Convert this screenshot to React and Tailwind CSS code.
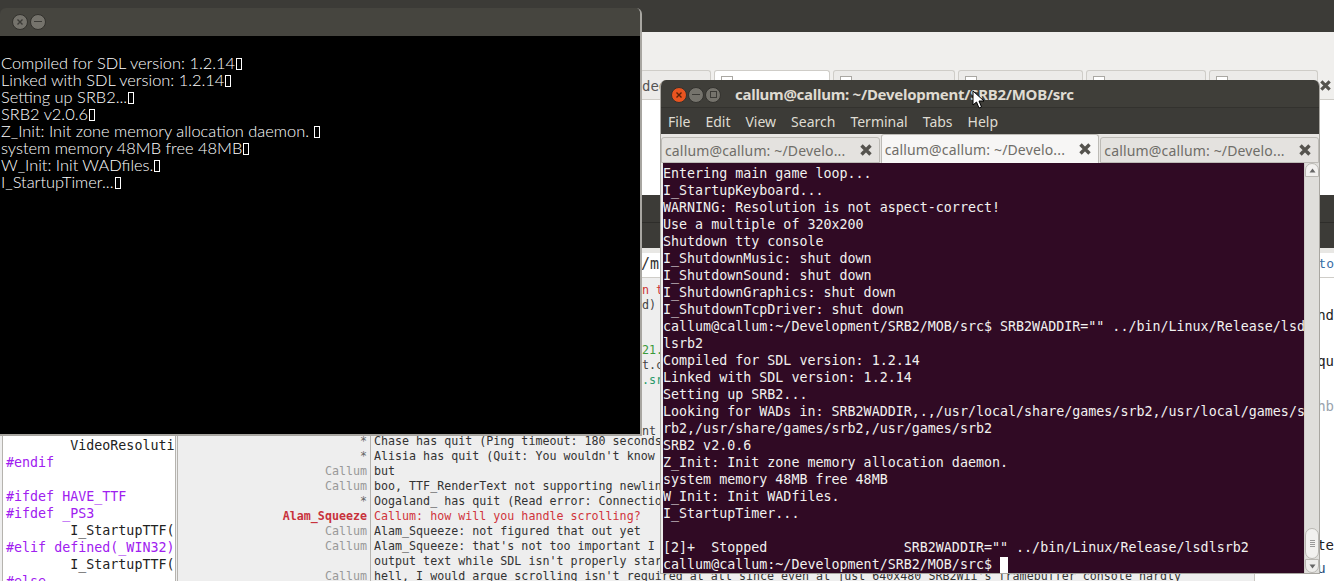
const mono = { fontFamily: '"DejaVu Sans Mono", monospace' };

const sdlLines = [
  "Compiled for SDL version: 1.2.14",
  "Linked with SDL version: 1.2.14",
  "Setting up SRB2...",
  "SRB2 v2.0.6",
  "Z_Init: Init zone memory allocation daemon. ",
  "system memory 48MB free 48MB",
  "W_Init: Init WADfiles.",
  "I_StartupTimer...",
];

const termLines = [
  "Entering main game loop...",
  "I_StartupKeyboard...",
  "WARNING: Resolution is not aspect-correct!",
  "Use a multiple of 320x200",
  "Shutdown tty console",
  "I_ShutdownMusic: shut down",
  "I_ShutdownSound: shut down",
  "I_ShutdownGraphics: shut down",
  "I_ShutdownTcpDriver: shut down",
  'callum@callum:~/Development/SRB2/MOB/src$ SRB2WADDIR="" ../bin/Linux/Release/lsd',
  "lsrb2",
  "Compiled for SDL version: 1.2.14",
  "Linked with SDL version: 1.2.14",
  "Setting up SRB2...",
  "Looking for WADs in: SRB2WADDIR,.,/usr/local/share/games/srb2,/usr/local/games/s",
  "rb2,/usr/share/games/srb2,/usr/games/srb2",
  "SRB2 v2.0.6",
  "Z_Init: Init zone memory allocation daemon.",
  "system memory 48MB free 48MB",
  "W_Init: Init WADfiles.",
  "I_StartupTimer...",
  " ",
  '[2]+  Stopped                 SRB2WADDIR="" ../bin/Linux/Release/lsdlsrb2',
];

const editorLines = [
  ["        VideoResoluti", "text-[#222]"],
  ["#endif", "text-[#a020f0]"],
  [" ", ""],
  ["#ifdef HAVE_TTF", "text-[#a020f0]"],
  ["#ifdef _PS3", "text-[#a020f0]"],
  ["        I_StartupTTF(", "text-[#222]"],
  ["#elif defined(_WIN32)", "text-[#a020f0]"],
  ["        I_StartupTTF(", "text-[#222]"],
  ["#else", "text-[#a020f0]"],
];

const chatRows = [
  ["*", "Chase has quit (Ping timeout: 180 seconds)"],
  ["*", "Alisia has quit (Quit: You wouldn't know it)"],
  ["Callum", "but"],
  ["Callum", "boo, TTF_RenderText not supporting newlines"],
  ["*", "Oogaland_ has quit (Read error: Connection reset)"],
  ["Alam_Squeeze", "Callum: how will you handle scrolling?", true],
  ["Callum", "Alam_Squeeze: not figured that out yet"],
  ["Callum", "Alam_Squeeze: that's not too important I guess"],
  ["", "output text while SDL isn't properly started"],
  ["Callum", "hell, I would argue scrolling isn't required at all since even at just 640x480 SRB2Wii's framebuffer console hardly"],
];

function BgTab({ w, active, children }) {
  return (
    <div
      className={`shrink-0 h-full border border-b-0 border-[#cfcdc8] rounded-t-[3px] overflow-hidden ${w} ${
        active ? "bg-white" : "bg-[#ecebe9] mt-[2px]"
      }`}
    >
      {children}
    </div>
  );
}

function TermTab({ active }) {
  return (
    <div
      className={`flex items-center justify-between flex-1 min-w-0 pl-[3px] pr-[6px] border border-[#bdbbb6] rounded-t-[3px] ${
        active ? "bg-[#f7f6f5] h-[29px] border-b-0" : "bg-[#e4e2df] h-[26px] mt-[3px]"
      }`}
    >
      <span
        className="text-[14px] text-[#6f6d68] whitespace-nowrap overflow-hidden"
        style={{ fontFamily: '"Noto Sans", sans-serif', letterSpacing: "0.15px" }}
      >
        callum@callum: ~/Develo...
      </span>
      <svg width="14" height="14" viewBox="0 0 14 14" className="shrink-0">
        <path d="M2.5 2.5 L11.5 11.5 M11.5 2.5 L2.5 11.5" stroke="#55534e" strokeWidth="3.4" />
      </svg>
    </div>
  );
}

function WinButton({ color, children }) {
  return (
    <div
      className={`w-[16px] h-[16px] rounded-full flex items-center justify-center border border-[#33322e] ${color}`}
    >
      {children}
    </div>
  );
}

function NoGlyph() {
  return (
    <span className="inline-block w-[6px] h-[12px] border border-white ml-[1px] align-[-1px]" />
  );
}

function DocIcon() {
  return <div className="w-[12px] h-[14px] mt-[5px] ml-[6px] bg-white border border-[#aaa8a3]" />;
}

export default function App() {
  return (
    <div className="relative w-[1334px] h-[581px] overflow-hidden bg-white">
      {/* window behind everything */}
      <div className="flex flex-col h-full">
        <div className="h-[32px] bg-[#3c3b37] shrink-0" />
        <div className="h-[38px] bg-[#f0efed] shrink-0" />
        <div
          className="h-[30px] bg-[#f0efed] border-b border-[#cfcdc8] shrink-0 flex items-end pl-[640px] gap-[3px] text-[#555]"
          style={mono}
        >
          <BgTab w="w-[71px]">
            <div className="text-[14px] leading-[30px] pl-[1px] whitespace-pre">ded</div>
          </BgTab>
          <BgTab w="w-[116px]" active>
            <DocIcon />
          </BgTab>
          <BgTab w="w-[122px]">
            <DocIcon />
          </BgTab>
          <BgTab w="w-[125px]">
            <DocIcon />
          </BgTab>
          <BgTab w="w-[120px]">
            <DocIcon />
          </BgTab>
          <BgTab w="w-[109px]">
            <DocIcon />
          </BgTab>
          <svg width="13" height="13" viewBox="0 0 14 14" className="shrink-0 mb-[7px] -ml-[2px]">
            <path d="M2.5 2.5 L11.5 11.5 M11.5 2.5 L2.5 11.5" stroke="#55534e" strokeWidth="3.4" />
          </svg>
        </div>
        <div className="h-[95px] bg-white shrink-0" />
        <div className="h-[28px] bg-[#3c3b37] border-b border-[#2e2d2a] shrink-0" />
        <div className="h-[25px] bg-[#3c3b37] shrink-0" />
        <div className="h-[5px] bg-[#e8e7e4] shrink-0" />
        <div
          className="h-[25px] bg-white border-b border-[#cfcdc8] shrink-0 flex justify-between text-[15px] text-[#333]"
          style={mono}
        >
          <span className="pl-[641px] leading-[22px]">/m</span>
          <span className="text-[#3a6ea5] text-[13px] leading-[22px]">to</span>
        </div>
        <div className="flex flex-1 min-h-0">
          <div className="w-[660px] bg-[#eeeeee] shrink-0" />
          <div
            className="flex-1 flex flex-col items-end text-[14px] text-[#222] leading-[17px] whitespace-pre pt-[29px]"
            style={mono}
          >
            <span className="h-[46px]">nd</span>
            <span className="h-[45px]">qu</span>
            <span className="h-[139px] text-[#9aa4ae]">hb</span>
            <span className="h-[23px]">te</span>
            <span className="text-[#2c4f7c]">u </span>
          </div>
        </div>
      </div>

      {/* fragments of chat visible between windows */}
      <div
        className="absolute left-[642px] top-[283px] w-[18px] h-[153px] overflow-hidden text-[11.7px] whitespace-pre leading-[15px]"
        style={mono}
      >
        <div className="text-[#c33]">n t</div>
        <div className="text-[#444]">d)</div>
        <div className="text-[#444] h-[30px]"> </div>
        <div className="text-[#3a9a3a]">21.</div>
        <div className="text-[#444]">t.c</div>
        <div className="text-[#2a9a6a]">.sr</div>
        <div className="mt-[36px] text-[#444]">nt</div>
      </div>

      {/* editor + chat */}
      <div className="absolute left-0 top-[436px] w-[1255px] h-[145px] flex overflow-hidden bg-[#eeeeee] border-r border-[#c8c6c1]">
        <div
          className="w-[174px] ml-[2px] shrink-0 bg-white border-l border-r border-[#b5b3ae] pl-[3px] pt-[1px] text-[13.33px] leading-[17px] whitespace-pre overflow-hidden"
          style={mono}
        >
          {editorLines.map(([t, c], i) => (
            <div key={i} className={`h-[17px] ${c}`}>
              {t}
            </div>
          ))}
        </div>
        <div
          className="flex-1 min-w-0 ml-[1px] border-l border-[#b5b3ae] text-[11.67px] leading-[15px] whitespace-pre overflow-hidden"
          style={mono}
        >
          {chatRows.map(([nick, msg, hi], i) => (
            <div key={i} className="flex h-[15px] first:mt-[-2px]">
              <span
                className={`w-[193px] shrink-0 text-right pr-[3px] border-r border-[#b5b3ae] ${
                  hi ? "text-[#c8323c] font-bold" : nick === "*" ? "text-[#666]" : "text-[#999]"
                }`}
              >
                {nick}
              </span>
              <span className={`pl-[3px] ${hi ? "text-[#d0343c]" : "text-[#333]"}`}>{msg}</span>
            </div>
          ))}
        </div>
      </div>

      {/* SDL window */}
      <div className="absolute left-0 top-[8px] w-[642px] h-[428px] flex flex-col rounded-t-[6px] overflow-hidden border-r-2 border-b-2 border-[#a8a6a1]">
        <div className="h-[28px] bg-[#46453f] shrink-0 flex items-center gap-[2px] pl-[12px] pb-[1px]">
          <WinButton color="bg-[#75736c]">
            <svg width="8" height="8" viewBox="0 0 8 8">
              <path d="M1.5 1.5 L6.5 6.5 M6.5 1.5 L1.5 6.5" stroke="#3c3b37" strokeWidth="1.4" />
            </svg>
          </WinButton>
          <WinButton color="bg-[#75736c]">
            <div className="w-[8px] h-[1.5px] bg-[#3c3b37]" />
          </WinButton>
        </div>
        <div
          className="flex-1 bg-black pt-[18px] text-[16.4px] leading-[17px] font-light text-white whitespace-pre pl-[1px]"
          style={{ fontFamily: "Lato, sans-serif" }}
        >
          {sdlLines.map((l, i) => (
            <div key={i} className="h-[17px]">
              {l}
              <NoGlyph />
            </div>
          ))}
        </div>
      </div>

      {/* Terminal */}
      <div className="absolute left-[660px] top-[80px] w-[660px] h-[494px] flex flex-col rounded-t-[6px] overflow-hidden border-x border-b border-[#a8a6a1] bg-[#edecea]">
        <div className="h-[28px] bg-[#3f3e39] border-b border-[#33322e] shrink-0 flex items-center pl-[10px] pt-[2px]">
          <div className="flex gap-[1px]">
            <WinButton color="bg-[#e95420]">
              <svg width="8" height="8" viewBox="0 0 8 8">
                <path d="M1.5 1.5 L6.5 6.5 M6.5 1.5 L1.5 6.5" stroke="#5a2208" strokeWidth="1.4" />
              </svg>
            </WinButton>
            <WinButton color="bg-[#75736c]">
              <div className="w-[8px] h-[1.5px] bg-[#3c3b37]" />
            </WinButton>
            <WinButton color="bg-[#75736c]">
              <div className="w-[7px] h-[7px] border border-[#3c3b37]" />
            </WinButton>
          </div>
          <span
            className="ml-[14px] text-[15px] font-bold text-[#dfdbd2] whitespace-nowrap"
            style={{ fontFamily: '"Noto Sans", sans-serif', letterSpacing: "-0.27px" }}
          >
            callum@callum: ~/Development/SRB2/MOB/src
          </span>
        </div>
        <div
          className="h-[26px] bg-[#3c3b37] shrink-0 flex items-center gap-[15px] pl-[7px] text-[14px] text-[#dfdbd2]"
          style={{ fontFamily: '"Noto Sans", sans-serif' }}
        >
          <span>File</span>
          <span>Edit</span>
          <span>View</span>
          <span>Search</span>
          <span>Terminal</span>
          <span>Tabs</span>
          <span>Help</span>
        </div>
        <div className="h-[29px] bg-[#e8e6e3] shrink-0 flex gap-[1px]">
          <TermTab />
          <TermTab active />
          <TermTab />
        </div>
        <div className="flex-1 min-h-0 flex pl-[2px] bg-[#edecea]">
          <div
            className="flex-1 min-w-0 bg-[#300a24] text-[#f2f1f0] text-[13.33px] leading-[17px] whitespace-pre overflow-hidden pt-[2px]"
            style={mono}
          >
            {termLines.map((l, i) => (
              <div key={i} className="h-[17px]">
                {l}
              </div>
            ))}
            <div className="h-[17px] flex items-center">
              <span>callum@callum:~/Development/SRB2/MOB/src$ </span>
              <span className="inline-block w-[8px] h-[16px] bg-white" />
            </div>
          </div>
          <div className="w-[15px] shrink-0 bg-[#dfdedb] flex flex-col items-stretch border-l border-[#d0cec9]">
            <div className="h-[14px] bg-[#f2f1ef] border border-[#b9b7b2] rounded-t-[7px] flex items-center justify-center">
              <svg width="7" height="5" viewBox="0 0 7 5">
                <path d="M3.5 0.5 L6.5 4.5 L0.5 4.5 Z" fill="#666" />
              </svg>
            </div>
            <div className="flex-1" />
            <div className="h-[31px] bg-[#f2f1ef] border border-[#b9b7b2] rounded-[7px] flex flex-col items-center justify-center gap-[1px]">
              <div className="w-[5px] h-px bg-[#999]" />
              <div className="w-[5px] h-px bg-[#999]" />
              <div className="w-[5px] h-px bg-[#999]" />
              <div className="w-[5px] h-px bg-[#999]" />
            </div>
            <div className="h-[14px] bg-[#efeeec] border border-[#b9b7b2] rounded-b-[7px] flex items-center justify-center">
              <svg width="7" height="5" viewBox="0 0 7 5">
                <path d="M3.5 4.5 L6.5 0.5 L0.5 0.5 Z" fill="#666" />
              </svg>
            </div>
          </div>
        </div>
      </div>

      {/* mouse pointer */}
      <svg
        width="14"
        height="19"
        viewBox="0 0 14 19"
        className="absolute left-[972px] top-[90px]"
      >
        <path
          d="M1 1 L1 15 L4.5 12 L7 18 L9.5 17 L7 11 L12 11 Z"
          fill="#fff"
          stroke="#000"
          strokeWidth="1"
          strokeLinejoin="round"
        />
      </svg>
    </div>
  );
}
